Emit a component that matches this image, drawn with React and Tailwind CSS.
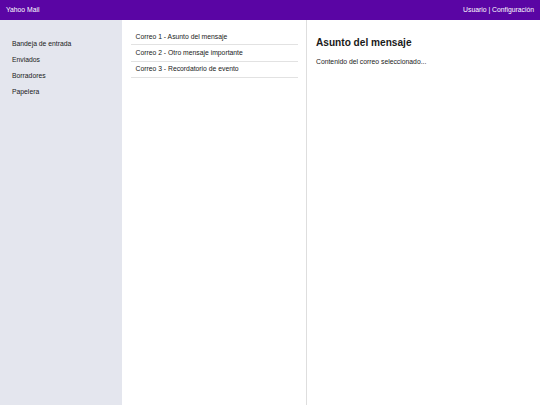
import React from 'react'

const folders = ['Bandeja de entrada', 'Enviados', 'Borradores', 'Papelera']

const emails = [
    'Correo 1 - Asunto del mensaje',
    'Correo 2 - Otro mensaje importante',
    'Correo 3 - Recordatorio de evento',
]

export default function App() {
    return (
        <div className="flex flex-col h-[405px] w-[540px] overflow-hidden text-[6.8px] text-[#1a1a1a] font-['Liberation_Sans',Arial,sans-serif]">
            {/* Top bar */}
            <header className="flex items-center justify-between h-[20px] px-[6px] bg-[#5a05a4] text-white shrink-0">
                <span>Yahoo Mail</span>
                <span>Usuario | Configuración</span>
            </header>

            <div className="flex flex-1 min-h-0">
                {/* Folders */}
                <aside className="w-[122px] shrink-0 bg-[#e4e6ee] pt-[16px] px-[12px]">
                    <ul>
                        {folders.map((folder) => (
                            <li key={folder} className="h-[16px] flex items-center">{folder}</li>
                        ))}
                    </ul>
                </aside>

                {/* Email list */}
                <section className="w-[185px] shrink-0 border-r border-[#dedede] pt-[9px] pl-[9px] pr-[8px]">
                    <ul>
                        {emails.map((email) => (
                            <li key={email} className="h-[16.35px] flex items-center pl-[4.5px] border-b border-[#e2e2e2]">
                                {email}
                            </li>
                        ))}
                    </ul>
                </section>

                {/* Reading pane */}
                <main className="flex-1 p-[9px]">
                    <h2 className="text-[10.125px] font-bold mt-[6px] mb-[6.5px]">Asunto del mensaje</h2>
                    <p>Contenido del correo seleccionado...</p>
                </main>
            </div>
        </div>
    )
}
